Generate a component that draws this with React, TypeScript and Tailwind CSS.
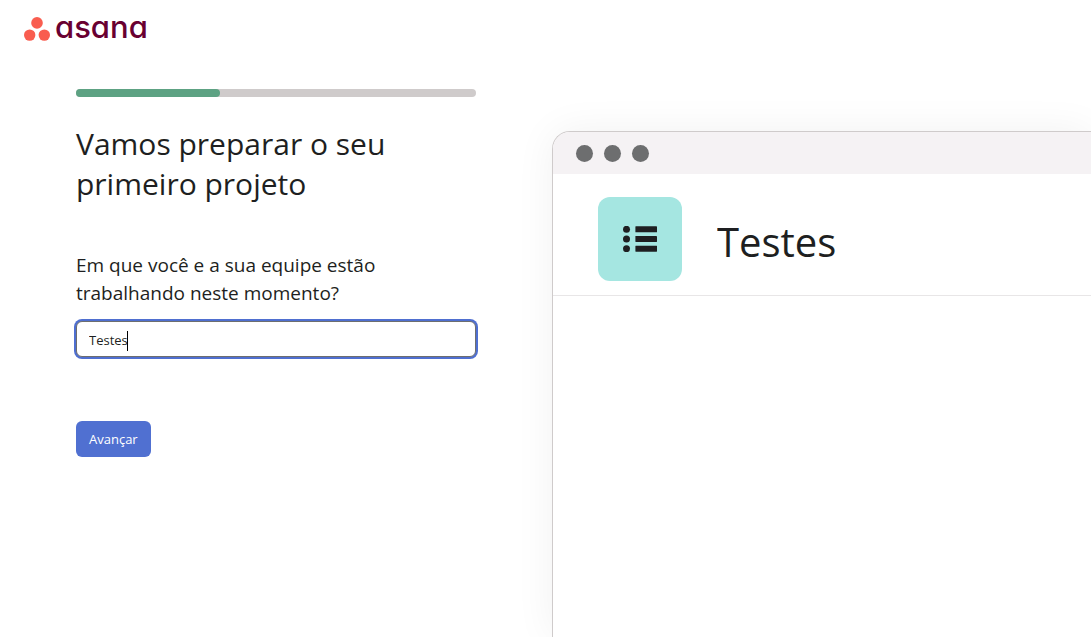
import { useState } from "react";

function AsanaLogo() {
  return (
    <a href="#" aria-label="asana" className="flex items-center gap-[5px]">
      <svg viewBox="0 0 26 24" className="h-6 w-[26px]" fill="#f95d4f" aria-hidden="true">
        <circle cx="13" cy="5.9" r="5.8" />
        <circle cx="5.7" cy="18.1" r="5.7" />
        <circle cx="20.3" cy="18.1" r="5.7" />
      </svg>
      <span className="pb-1 font-['Inter',sans-serif] text-[31px] leading-6 font-medium text-[#690031] [font-feature-settings:'cv11']">
        asana
      </span>
    </a>
  );
}

function ListIcon() {
  return (
    <svg viewBox="0 0 34 26" className="h-[26px] w-[34px]" fill="#1e1f21" aria-hidden="true">
      {[3.3, 13, 22.7].map((y) => (
        <g key={y}>
          <circle cx="3.5" cy={y} r="3.5" />
          <rect x="12.4" y={y - 3} width="21.6" height="6" rx="0.4" />
        </g>
      ))}
    </svg>
  );
}

function Preview({ name }: { name: string }) {
  return (
    <section className="flex min-w-0 flex-1 flex-col overflow-clip rounded-tl-[18px] border-t border-l border-[#cfcbcb] bg-white shadow-[0_0_40px_rgba(0,0,0,0.06)]">
      <div className="flex h-[42px] shrink-0 items-center gap-[11px] bg-[#f5f2f4] pl-[23px]">
        <span className="size-[17px] rounded-full bg-[#6d6e6f]" />
        <span className="size-[17px] rounded-full bg-[#6d6e6f]" />
        <span className="size-[17px] rounded-full bg-[#6d6e6f]" />
      </div>
      <div className="flex items-center gap-[35px] border-b border-[#e8e6e7] pt-[23px] pb-3.5 pl-[45px]">
        <div className="flex size-21 shrink-0 items-center justify-center rounded-xl bg-[#a5e6e1]">
          <ListIcon />
        </div>
        <h2 className="truncate pt-1.5 text-[40px] leading-[60px] text-[#1e1f21]">{name}</h2>
      </div>
    </section>
  );
}

export default function App() {
  const [name, setName] = useState("Testes");
  const [pristine, setPristine] = useState(true);

  return (
    <div className="flex min-h-screen flex-col overflow-hidden bg-white font-['Open_Sans','Noto_Sans',sans-serif] text-[#1e1f21]">
      <header className="flex h-[58px] shrink-0 items-center px-6">
        <AsanaLogo />
      </header>
      <main className="flex flex-1 gap-[76px] pl-[76px]">
        <form className="w-[400px] shrink-0 pt-[31px]" onSubmit={(e) => e.preventDefault()}>
          <div
            role="progressbar"
            aria-label="Progresso"
            aria-valuenow={36}
            aria-valuemin={0}
            aria-valuemax={100}
            className="h-2 rounded-full bg-[#cfcbcb]"
          >
            <div className="h-2 w-[36%] rounded-full bg-[#5da283]" />
          </div>
          <h1 className="mt-[27px] text-[30px] leading-10">
            Vamos preparar o seu
            <br />
            primeiro projeto
          </h1>
          <label htmlFor="project" className="mt-[47px] block text-[19px] leading-7">
            Em que você e a sua equipe estão
            <br />
            trabalhando neste momento?
          </label>
          <div className="relative mt-3.5">
            <input
              id="project"
              value={name}
              onFocus={() => setPristine(false)}
              onChange={(e) => setName(e.target.value)}
              className="block h-9 w-full rounded-md border border-[#6d6e6f] bg-white px-3 pt-0.5 text-[13px] ring-2 ring-[#4f6fd0] outline-none"
            />
            {pristine && (
              <span aria-hidden="true" className="absolute top-2.5 left-[51px] h-5 w-px bg-black" />
            )}
          </div>
          <button type="submit" className="mt-16 h-9 rounded-md bg-[#5070d1] px-[13px] pt-0.5 text-[13px] text-white">
            Avançar
          </button>
        </form>
        <div className="flex min-w-0 flex-1 pt-[73px]">
          <Preview name={name} />
        </div>
      </main>
    </div>
  );
}
